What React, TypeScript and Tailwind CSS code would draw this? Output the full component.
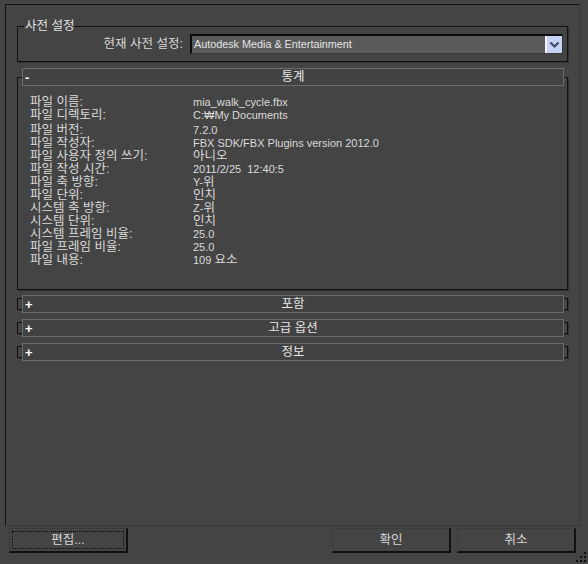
import React from "react";

const stats: [string, string][] = [
  ["파일 이름:", "mia_walk_cycle.fbx"],
  ["파일 디렉토리:", "C:₩My Documents"],
  ["파일 버전:", "7.2.0"],
  ["파일 작성자:", "FBX SDK/FBX Plugins version 2012.0"],
  ["파일 사용자 정의 쓰기:", "아니오"],
  ["파일 작성 시간:", "2011/2/25  12:40:5"],
  ["파일 축 방향:", "Y-위"],
  ["파일 단위:", "인치"],
  ["시스템 축 방향:", "Z-위"],
  ["시스템 단위:", "인치"],
  ["시스템 프레임 비율:", "25.0"],
  ["파일 프레임 비율:", "25.0"],
  ["파일 내용:", "109 요소"],
];

// hangul in the value column is drawn a bit larger than the latin part
function MixedText({ text }: { text: string }) {
  const parts = text.split(/([\uac00-\ud7a3]+)/);
  return (
    <>
      {parts.map((p, i) =>
        /[\uac00-\ud7a3]/.test(p) ? (
          <span key={i} className="text-[12.5px]">{p}</span>
        ) : (
          <span key={i}>{p}</span>
        )
      )}
    </>
  );
}

function RolloutHeader({ sign, title, pull }: { sign: string; title: string; pull: string }) {
  return (
    <div className={`${pull} ml-[4px] mr-[3px] h-[18px] border border-[#6a6a6a] bg-[#424242] grid grid-cols-[24px_1fr_24px] items-center`}>
      <span className="pl-[2px] text-[13px] font-bold text-white leading-none">{sign}</span>
      <span className="text-center text-[12.5px] text-[#e6e6e6] leading-none">{title}</span>
      <span />
    </div>
  );
}

function Collapsed({ title }: { title: string }) {
  return (
    <div className="ml-[11px] w-[551px] border border-[#121212] shadow-[1px_1px_0_#303030]">
      <div className="-mt-[4px] -mb-[4px]">
        <RolloutHeader sign="+" title={title} pull="" />
      </div>
    </div>
  );
}

function DialogButton({ label, focused }: { label: string; focused?: boolean }) {
  return (
    <button className="w-[119px] h-[25px] bg-[#444444] border-t border-l border-[#3a3a3a] border-r-2 border-b-2 border-r-[#111111] border-b-[#111111] p-[2px] flex">
      <span className={`flex-1 flex items-center justify-center text-[12.5px] text-[#d6d6d6] ${focused ? "border border-dotted border-black" : ""}`}>
        {label}
      </span>
    </button>
  );
}

export default function App() {
  return (
    <div className="relative w-[588px] h-[564px] bg-[#444444] overflow-hidden pt-[4px] font-['Liberation_Sans','Noto_Sans_CJK_KR',sans-serif] text-[#dadada]">
      <div className="ml-[5px] w-[575px] h-[522px] border-t border-l border-[#111111] border-r border-b border-r-[#383838] border-b-[#383838]">
        <fieldset className="ml-[11px] mt-[14px] w-[551px] border border-[#121212] shadow-[1px_1px_0_#303030] pb-[7px]">
          <legend className="ml-[6px] px-[1px] text-[12.5px] leading-[14px] text-[#e2e2e2]">사전 설정</legend>
          <div className="flex items-center justify-end pr-[4px] pt-[1px]">
            <span className="mr-[7px] text-[12.5px] text-[#d8d8d8]">현재 사전 설정:</span>
            <div className="w-[373px] h-[20px] flex bg-[#5a5a5a] border-t-2 border-l-2 border-[#0c0c0c] border-r border-b border-r-[#333333] border-b-[#3a3a3a]">
              <span className="flex-1 flex items-center pl-[2px] text-[10.8px] text-[#e4e4e4]">Autodesk Media &amp; Entertainment</span>
              <span className="w-[17px] h-[17px] bg-[#c4d3f6] border-l-2 border-[#f2f5fc] flex items-center justify-center">
                <svg width="11" height="8" viewBox="0 0 11 8">
                  <polyline points="1.5,1.5 5.5,5.5 9.5,1.5" fill="none" stroke="#3d4b68" strokeWidth="2.2" />
                </svg>
              </span>
            </div>
          </div>
        </fieldset>

        <div className="ml-[11px] mt-[15px] w-[551px] border border-[#121212] shadow-[1px_1px_0_#303030] pb-[22px]">
          <RolloutHeader sign="-" title="통계" pull="-mt-[10px]" />
          <div className="pt-[10px] pl-[12px] grid grid-cols-[163px_1fr] text-[12.5px] leading-[13px]">
            {stats.map(([k, v], i) => (
              <React.Fragment key={k}>
                <span className={i === 2 ? "pt-[2px]" : ""}>{k}</span>
                <span className={`${i === 2 ? "pt-[2px]" : ""} text-[11px] whitespace-pre`}>
                  <MixedText text={v} />
                </span>
              </React.Fragment>
            ))}
          </div>
        </div>

        <div className="mt-[8px] flex flex-col gap-[12px]">
          <Collapsed title="포함" />
          <Collapsed title="고급 옵션" />
          <Collapsed title="정보" />
        </div>
      </div>

      <div className="flex mt-[2px] pl-[9px] pr-[12px]">
        <DialogButton label="편집..." focused />
        <div className="ml-auto flex gap-[6px]">
          <DialogButton label="확인" />
          <DialogButton label="취소" />
        </div>
      </div>

      <svg className="absolute right-0 bottom-0" width="13" height="13" viewBox="0 0 13 13">
        <rect x="9" y="1" width="2" height="2" fill="#111" />
        <rect x="5" y="5" width="2" height="2" fill="#111" />
        <rect x="9" y="5" width="2" height="2" fill="#111" />
        <rect x="1" y="9" width="2" height="2" fill="#111" />
        <rect x="5" y="9" width="2" height="2" fill="#111" />
        <rect x="9" y="9" width="2" height="2" fill="#111" />
      </svg>
    </div>
  );
}
